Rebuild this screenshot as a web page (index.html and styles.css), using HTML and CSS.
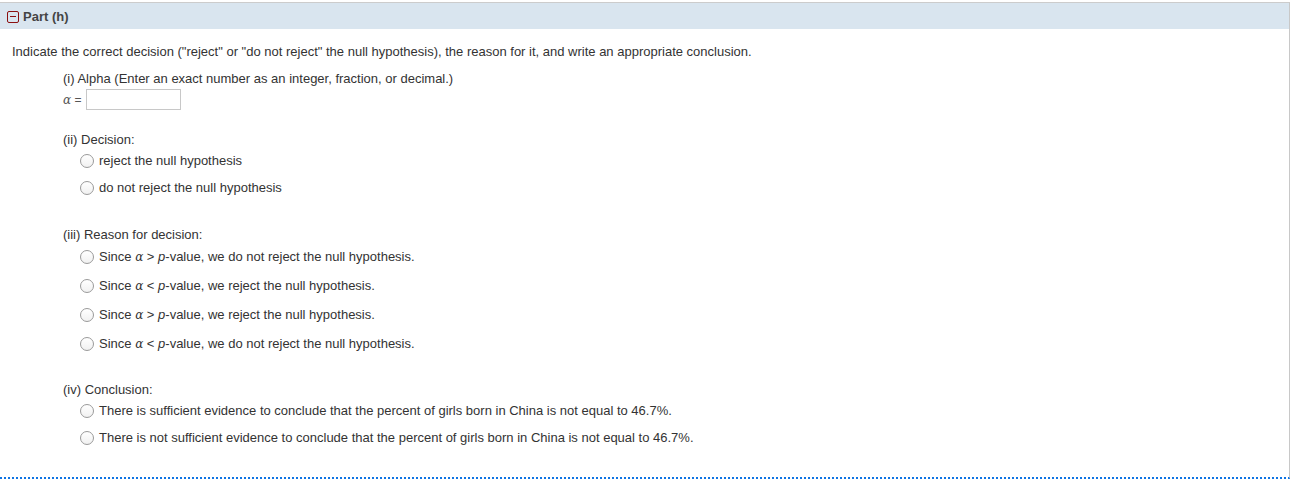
FILE: index.html
```html
<!DOCTYPE html>
<html>
<head>
<meta charset="utf-8">
<link rel="stylesheet" href="styles.css">
</head>
<body>
<div class="part">
  <div class="part-head">
    <span class="toggle"><span class="toggle-bar"></span></span>
    <span class="part-title">Part (h)</span>
  </div>
  <div class="part-body">
    <p class="prompt">Indicate the correct decision ("reject" or "do not reject" the null hypothesis), the reason for it, and write an appropriate conclusion.</p>
    <div class="sub sub-alpha">
      <div class="sub-label">(i) Alpha (Enter an exact number as an integer, fraction, or decimal.)</div>
      <div class="alpha-row"><span class="greek">α</span>&nbsp;=&nbsp;<span class="input"></span></div>
    </div>
    <div class="sub sub-decision">
      <div class="sub-label">(ii) Decision:</div>
      <div class="opt"><span class="radio"></span><span>reject the null hypothesis</span></div>
      <div class="opt"><span class="radio"></span><span>do not reject the null hypothesis</span></div>
    </div>
    <div class="sub sub-reason">
      <div class="sub-label">(iii) Reason for decision:</div>
      <div class="opt opt-tall"><span class="radio"></span><span>Since <i class="greek">α</i> &gt; <i>p</i>-value, we do not reject the null hypothesis.</span></div>
      <div class="opt opt-tall"><span class="radio"></span><span>Since <i class="greek">α</i> &lt; <i>p</i>-value, we reject the null hypothesis.</span></div>
      <div class="opt opt-tall"><span class="radio"></span><span>Since <i class="greek">α</i> &gt; <i>p</i>-value, we reject the null hypothesis.</span></div>
      <div class="opt opt-tall"><span class="radio"></span><span>Since <i class="greek">α</i> &lt; <i>p</i>-value, we do not reject the null hypothesis.</span></div>
    </div>
    <div class="sub">
      <div class="sub-label">(iv) Conclusion:</div>
      <div class="opt"><span class="radio"></span><span>There is sufficient evidence to conclude that the percent of girls born in China is not equal to 46.7%.</span></div>
      <div class="opt"><span class="radio"></span><span>There is not sufficient evidence to conclude that the percent of girls born in China is not equal to 46.7%.</span></div>
    </div>
  </div>
</div>
</body>
</html>
```
FILE: styles.css
```css
html, body {
  margin: 0;
  padding: 0;
  background: #fff;
}
body {
  font-family: "Liberation Sans", Arial, sans-serif;
  font-size: 13px;
  color: #333;
  padding-top: 2px;
}
.part {
  width: 1290px;
  height: 477px;
  border-top: 1px solid #cccccc;
  border-right: 1px solid #c8c8c8;
  border-bottom: 2px dotted #0f74e3;
  box-sizing: border-box;
}
.part-head {
  height: 26px;
  background: #d9e5ef;
  display: flex;
  align-items: center;
  padding-left: 7px;
}
.toggle {
  width: 12px;
  height: 12px;
  border: 1.5px solid #8b1111;
  border-radius: 2px;
  box-sizing: border-box;
  display: flex;
  align-items: center;
  justify-content: center;
  margin-right: 4px;
  margin-top: 1px;
}
.toggle-bar {
  width: 6px;
  height: 1.5px;
  background: #8b1111;
}
.part-title {
  font-weight: bold;
  font-size: 13px;
  color: #444;
}
.part-body {
  padding: 15px 0 0 12px;
}
.prompt {
  margin: 0 0 12px 0;
  line-height: 15px;
}
.sub {
  padding-left: 51px;
  margin-bottom: 24px;
}
.sub-alpha {
  margin-bottom: 22px;
}
.sub-decision {
  margin-bottom: 26px;
}
.sub-label {
  line-height: 15px;
}
.alpha-row {
  display: flex;
  align-items: center;
  margin-top: 3px;
  font-size: 12px;
  color: #555;
}
.greek {
  font-family: "DejaVu Serif", "Liberation Serif", serif;
  font-style: italic;
  font-size: 12px;
}
.input {
  display: inline-block;
  width: 95px;
  height: 21px;
  border: 1px solid #c8c8c8;
  box-sizing: border-box;
  margin-left: 1px;
}
.opt {
  display: flex;
  align-items: center;
  padding-left: 17px;
  height: 27px;
}
.opt-tall {
  height: 29px;
}
.radio {
  width: 14px;
  height: 14px;
  border: 1px solid #9a9a9a;
  border-radius: 50%;
  box-sizing: border-box;
  margin-right: 5px;
  background: linear-gradient(#fff, #f1f1f1);
}
```
